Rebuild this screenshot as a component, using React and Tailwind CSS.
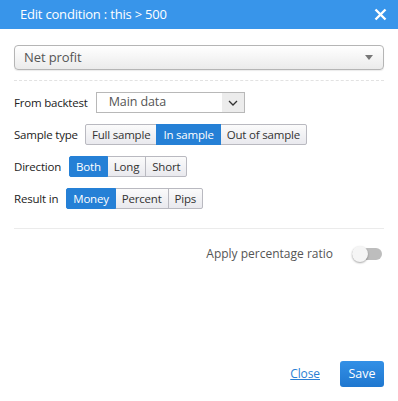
import { useState } from "react";

function ButtonGroup({ options, value, onChange }) {
  return (
    <div className="flex h-[21px]">
      {options.map((opt, i) => (
        <button
          key={opt}
          onClick={() => onChange(opt)}
          className={`px-[6px] text-[11.5px] tracking-[-0.2px] leading-none border ${
            i > 0 ? "-ml-px" : ""
          } ${i === 0 ? "rounded-l-[2px]" : ""} ${
            i === options.length - 1 ? "rounded-r-[2px]" : ""
          } ${
            value === opt
              ? "bg-[#2580d6] border-[#2580d6] text-white relative z-10"
              : "bg-gradient-to-b from-[#fbfbfb] to-[#e9e9ee] border-[#b9b9c0] text-[#333]"
          }`}
        >
          {opt}
        </button>
      ))}
    </div>
  );
}

export default function App() {
  const [sample, setSample] = useState("In sample");
  const [direction, setDirection] = useState("Both");
  const [result, setResult] = useState("Money");
  const [ratio, setRatio] = useState(false);

  return (
    <div
      className="w-[398px] h-[401px] bg-white flex flex-col"
      style={{ fontFamily: '"Open Sans", "Noto Sans", sans-serif' }}
    >
      {/* Header */}
      <div className="h-[29px] bg-[#3895ea] flex items-center justify-between pl-[20px] pr-[11px] shrink-0">
        <span className="text-white text-[13px] tracking-[-0.2px]">Edit condition : this &gt; 500</span>
        <svg width="13" height="13" viewBox="0 0 13 13">
          <path d="M1.5 1.5 L11.5 11.5 M11.5 1.5 L1.5 11.5" stroke="white" strokeWidth="2.4" />
        </svg>
      </div>

      <div className="px-[14px] flex flex-col flex-1">
        {/* Metric select */}
        <div className="mt-[16px] h-[25px] rounded-[4px] border border-[#b5b5b5] bg-gradient-to-b from-white to-[#ebebeb] shadow-[0_1px_1px_rgba(0,0,0,0.08)] flex items-center justify-between pl-[9px] pr-[10px]">
          <span className="text-[13px] tracking-[-0.1px] text-[#555]">Net profit</span>
          <svg width="8" height="5" viewBox="0 0 8 5">
            <path d="M0 0 H8 L4 5 Z" fill="#777" />
          </svg>
        </div>

        <div className="mt-[10px] border-t border-dashed border-[#e2e2e2]" />

        {/* Form rows */}
        <div className="mt-[11px] flex flex-col gap-[11px] text-[11.5px] tracking-[-0.2px] text-[#222]">
          <div className="flex items-center gap-[8px] h-[21px]">
            <span>From backtest</span>
            <div className="w-[149px] h-[21px] border border-[#b8b8b8] flex items-center">
              <span className="flex-1 pl-[12px] text-[12.5px] tracking-[-0.1px] text-[#555]">Main data</span>
              <div className="w-[22px] h-full bg-[#ececec] flex items-center justify-center">
                <svg width="10" height="6" viewBox="0 0 10 6">
                  <path d="M1 1 L5 5 L9 1" stroke="#333" strokeWidth="1.3" fill="none" />
                </svg>
              </div>
            </div>
          </div>

          <div className="flex items-center gap-[7px] h-[21px]">
            <span>Sample type</span>
            <ButtonGroup
              options={["Full sample", "In sample", "Out of sample"]}
              value={sample}
              onChange={setSample}
            />
          </div>

          <div className="flex items-center gap-[8px] h-[21px]">
            <span>Direction</span>
            <ButtonGroup options={["Both", "Long", "Short"]} value={direction} onChange={setDirection} />
          </div>

          <div className="flex items-center gap-[8px] h-[21px]">
            <span>Result in</span>
            <ButtonGroup options={["Money", "Percent", "Pips"]} value={result} onChange={setResult} />
          </div>
        </div>

        <div className="mt-[19px] border-t border-[#ebebeb]" />

        {/* Ratio toggle */}
        <div className="mt-[16px] flex items-center justify-end gap-[19px] pr-[2px]">
          <span className="text-[12px] text-[#555]">Apply percentage ratio</span>
          <button
            onClick={() => setRatio(!ratio)}
            className={`relative w-[30px] h-[12px] rounded-full ${ratio ? "bg-[#8ec2f2]" : "bg-[#bdbdbd]"}`}
          >
            <span
              className={`absolute top-[-2px] w-[16px] h-[16px] rounded-full shadow-[0_1px_2px_rgba(0,0,0,0.35)] ${
                ratio ? "left-[14px] bg-[#2580d6]" : "left-0 bg-[#f5f5f5]"
              }`}
            />
          </button>
        </div>

        {/* Footer */}
        <div className="mt-auto mb-[14px] flex items-center justify-end gap-[20px]">
          <button className="text-[12px] tracking-[-0.1px] text-[#2a7fd4] underline">Close</button>
          <button className="w-[44px] h-[26px] rounded-[3px] bg-gradient-to-b from-[#3390e6] to-[#1f77cf] text-white text-[12.5px]">
            Save
          </button>
        </div>
      </div>
    </div>
  );
}
